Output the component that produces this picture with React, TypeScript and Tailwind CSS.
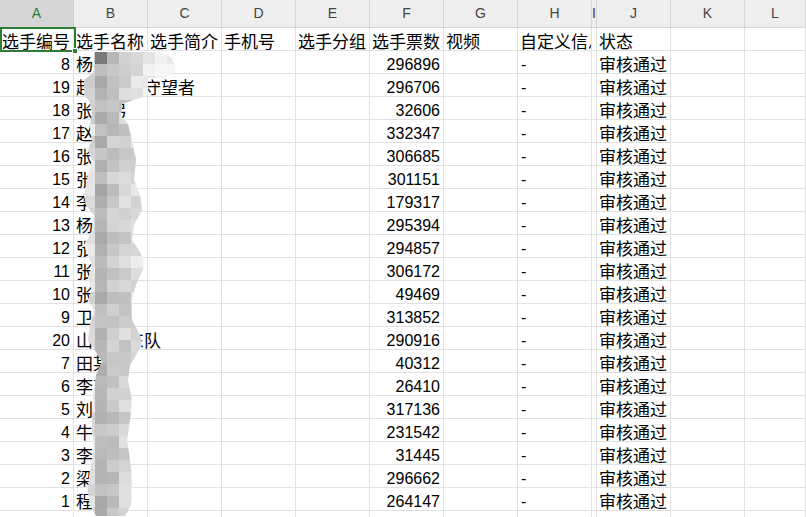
import React from "react";

const letters = ["A", "B", "C", "D", "E", "F", "G", "H", "I", "J", "K", "L"];

const titles = [
  "选手编号",
  "选手名称",
  "选手简介",
  "手机号",
  "选手分组",
  "选手票数",
  "视频",
  "自定义信息",
  "",
  "状态",
  "",
  "",
];

const rows: [number, string, number][] = [
  [8, "杨某某", 296896],
  [19, "赵某某某守望者", 296706],
  [18, "张某弓", 32606],
  [17, "赵某某", 332347],
  [16, "张某某", 306685],
  [15, "张某某", 301151],
  [14, "李某某", 179317],
  [13, "杨某某", 295394],
  [12, "张某某", 294857],
  [11, "张某某", 306172],
  [10, "张某某", 49469],
  [9, "卫某某", 313852],
  [20, "山西某东队", 290916],
  [7, "田某某", 40312],
  [6, "李某某", 26410],
  [5, "刘某某", 317136],
  [4, "牛某某", 231542],
  [3, "李某某", 31445],
  [2, "梁某某", 296662],
  [1, "程某某", 264147],
];

const cjk = "font-['Noto_Sans_CJK_SC',sans-serif]";
const num = "font-['Liberation_Sans',sans-serif]";
const grid =
  "grid grid-cols-[74px_74px_74px_74px_74px_74px_74px_74px_5px_74px_74px_1fr]";
const cell = "h-[23px] border-r border-b border-[#e1e1e1] flex items-end whitespace-nowrap";
const cjkText = " text-[17px] leading-[18px] pl-[2px] " + cjk;
const numText = " text-[16px] leading-[17px] " + num;

// mosaic blur over the name column
const blurLeft = [
  [94, 52], [94, 72], [84, 80], [84, 95], [90, 102], [92, 115], [90, 125], [92, 140],
  [88, 150], [92, 160], [88, 175], [84, 195], [86, 205], [94, 215], [93, 230], [84, 245],
  [88, 255], [92, 265], [88, 280], [92, 290], [88, 300], [94, 310], [90, 325], [88, 340],
  [96, 352], [102, 362], [96, 375], [94, 390], [92, 410], [92, 430], [94, 450], [90, 470],
  [88, 490], [90, 505], [96, 516],
];
const blurRight = [
  [125, 516], [131, 505], [132, 480], [130, 460], [127, 440], [130, 420], [132, 400],
  [128, 380], [130, 365], [142, 345], [140, 335], [132, 320], [132, 300], [136, 285],
  [145, 265], [140, 252], [132, 240], [134, 225], [142, 210], [140, 195], [134, 180],
  [136, 160], [132, 140], [128, 124], [121, 116], [122, 104], [140, 98], [148, 95],
  [148, 78], [165, 78], [176, 70], [172, 58], [160, 52],
];
const blurPath =
  "M " + [...blurLeft, ...blurRight].map((p) => p.join(" ")).join(" L ") + " Z";

const colBase = [0xdc, 0xb6, 0xc6, 0xd0, 0xdc, 0xe6, 0xee, 0xf4];
const blocks: { x: number; y: number; c: string }[] = [];
for (let j = 0; j < 39; j++) {
  for (let i = 0; i < colBase.length; i++) {
    const r = Math.sin(i * 12.9898 + j * 78.233) * 43758.5453;
    const v = Math.round(colBase[i] + ((r - Math.floor(r)) - 0.5) * 34);
    const g = Math.max(0x70, Math.min(0xf8, v)).toString(16);
    blocks.push({ x: 83 + i * 12, y: 52 + j * 12, c: `#${g}${g}${g}` });
  }
}
blocks[1].c = "#7a7a7a";

function Blur() {
  return (
    <svg
      className="absolute left-0 top-0 pointer-events-none"
      width={806}
      height={517}
    >
      <defs>
        <clipPath id="mosaic">
          <path d={blurPath} />
        </clipPath>
      </defs>
      <g clipPath="url(#mosaic)">
        <rect x={80} y={52} width={110} height={470} fill="#f2f2f2" />
        {blocks.map((b, k) => (
          <rect key={k} x={b.x} y={b.y} width={12} height={12} fill={b.c} />
        ))}
      </g>
    </svg>
  );
}

export default function App() {
  return (
    <div className="relative w-[806px] h-[517px] overflow-hidden bg-white text-black">
      <div className={grid}>
        {letters.map((l, i) => (
          <div
            key={l}
            className={
              "h-[28px] flex items-center justify-center border-r border-b text-[14px] overflow-hidden " +
              num +
              (i === 0
                ? " bg-[#d6d6d6] border-[#cfcfcf] text-[#2e7d32] border-b-[#2e7d32]"
                : " bg-[#eeeeee] border-[#d6d6d6] text-[#444]")
            }
          >
            {l}
          </div>
        ))}

        {titles.map((t, i) => (
          <div
            key={"t" + i}
            className={cell + cjkText + (i === 7 ? " overflow-hidden" : "")}
          >
            {t}
          </div>
        ))}

        {rows.map(([id, name, votes]) => (
          <React.Fragment key={id}>
            <div className={cell + " justify-end pr-[3px]" + numText}>{id}</div>
            <div className={cell + cjkText}>{name}</div>
            <div className={cell} />
            <div className={cell} />
            <div className={cell} />
            <div className={cell + " justify-end pr-[3px]" + numText}>{votes}</div>
            <div className={cell} />
            <div className={cell + " pl-[3px]" + numText}>-</div>
            <div className={cell} />
            <div className={cell + cjkText}>审核通过</div>
            <div className={cell} />
            <div className={cell} />
          </React.Fragment>
        ))}

        {letters.map((l) => (
          <div key={"e" + l} className={cell} />
        ))}
      </div>

      {/* selected cell A1 */}
      <div className="absolute z-10 left-0 top-[27px] w-[76px] h-[25px] border-2 border-[#2e7d32] pointer-events-none" />
      <div className="absolute z-10 left-[72px] top-[48px] w-[6px] h-[6px] bg-[#2e7d32] border border-white pointer-events-none" />

      <Blur />
    </div>
  );
}
